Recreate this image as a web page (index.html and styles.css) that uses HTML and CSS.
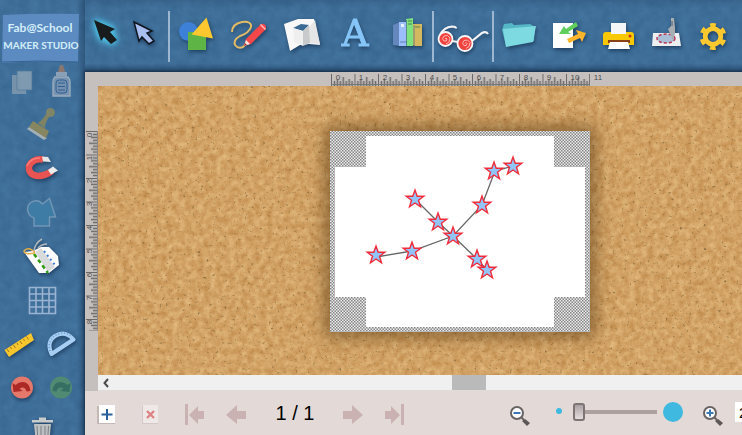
FILE: index.html
```html
<!DOCTYPE html>
<html lang="en">
<head>
<meta charset="utf-8">
<meta name="viewport" content="width=device-width, initial-scale=1">
<title>Fab@School Maker Studio</title>
<link rel="stylesheet" href="styles.css">
</head>
<body>
<div class="app">
  <svg class="texture" aria-hidden="true">
    <filter id="felt" x="0" y="0" width="100%" height="100%" color-interpolation-filters="sRGB">
      <feTurbulence type="fractalNoise" baseFrequency="0.1" numOctaves="3" seed="4"/>
      <feColorMatrix values="0.06 0 0 0 0.215  0.07 0 0 0 0.400  0.08 0 0 0 0.560  0 0 0 0 1"/>
    </filter>
    <rect width="100%" height="100%" filter="url(#felt)"/>
  </svg>

  <aside class="side">
    <a class="logo" href="#" aria-label="Fab@School Maker Studio">
      <svg viewBox="0 12 82 54">
        <path d="M3 15Q40 13 79 14L78 62Q40 60 2 63Z" fill="#5c8bc2"/>
        <path d="M2 62Q40 60 78 62" fill="none" stroke="#376394" stroke-width="1"/>
        <g class="logo-text" text-anchor="middle">
          <text class="logo-top" x="40" y="32">Fab@School</text>
          <text class="logo-main" x="41" y="49">MAKER STUDIO</text>
        </g>
      </svg>
    </a>
    <div class="row">
      <button type="button" aria-label="Copy"><svg viewBox="2 60 40 44" opacity=".75"><path d="M12 75h14v19H12z" fill="#8aa0b2"/><path d="M17 71h15v19H17z" fill="#92a8b8" stroke="#56789a" stroke-width=".7"/></svg></button>
      <button type="button" aria-label="Glue"><svg viewBox="42 60 40 44"><path d="M58 72l2-7h3l2 7z" fill="#8a7771"/><path d="M56 72h11v4H56z" fill="#8aa0b6"/><path d="M55 77h13q2 2 2 5v14H53V82q0-3 2-5z" fill="#7593b0" stroke="#9aacbd" stroke-width="1.4"/><rect x="56" y="80" width="11" height="13" rx="3" fill="#7391af" stroke="#315f91" stroke-width="1"/><path d="M58 83h7M58 86.500h7M58 90h7" stroke="#315f91"/></svg></button>
    </div>
    <div class="row"><button type="button" aria-label="Stamp"><svg viewBox="20 104 40 44"><path d="M29 127l18 11-3 2-17-11z" fill="#a4b0b5"/><path d="M33 121l16 10-3 7-17-11z" fill="#868660"/><path d="M38 123q6-4 9-11l4 3q-6 6-6 13z" fill="#7f8363"/><circle cx="50.500" cy="112.500" r="4.500" fill="#7f8567"/></svg></button></div>
    <div class="row"><button type="button" aria-label="Magnet"><svg class="lift" viewBox="20 148 40 44"><path d="M43 159.500Q33 158 29 166Q28 175 38 176Q45 176 52 171" fill="none" stroke="#e95452" stroke-width="6.500"/><path d="M40 158Q30 158 27 166" fill="none" stroke="#fa7b78" stroke-width="1.500"/><path d="M42 156.500l6 .5 3 5-8-.5z" fill="#e6e6e6"/><path d="M48 170l5-3.500 5 4-7 4z" fill="#ececec"/></svg></button></div>
    <div class="row"><button type="button" aria-label="Combine shapes"><svg viewBox="20 192 40 44"><path d="M34 226v-8q-6-2-6.500-9a8.500 8.500 0 0 1 15-5l7-5.500 6 18.500h-6v9z" fill="#3f7ca5" stroke="#7195b5" stroke-width="1.500"/></svg></button></div>
    <div class="row"><button type="button" aria-label="Tag"><svg class="lift" viewBox="20 236 40 44"><path d="M24 252l9-1 15 22-9 0z" fill="#fff"/><path d="M33 251l8-4h8l9 9 1 9-10 8-6 0z" fill="#fff"/><path d="M35 252l6-4 14 19-7 5z" fill="#d8dadb"/><path d="M34 254l14 19" stroke="#2f9a12" stroke-width="2.500" stroke-dasharray="4 3"/><path d="M44 251l11 14" stroke="#3d7ed0" stroke-width="2" stroke-dasharray="2 3"/><path d="M35 253q-11 2-11-2 3-4 8-1l3 2" fill="none" stroke="#e4ae48" stroke-width="1.500"/><path d="M34 251q1-8 8-12M38 248q4-4 9-4" fill="none" stroke="#b1b8bb" stroke-width="1.500"/></svg></button></div>
    <div class="row"><button type="button" aria-label="Grid"><svg viewBox="20 280 40 44"><path d="M29.500 287.500h26v26h-26zM36 287v27M42.500 287v27M49 287v27M29 294h27M29 300.500h27M29 307h27" fill="none" stroke="#9bb3d2" stroke-width="1.600"/></svg></button></div>
    <div class="row">
      <button type="button" aria-label="Ruler"><svg class="lift" viewBox="2 324 40 44"><path d="M4.500 350L31 333l3 7L9 357z" fill="#f7c62d"/><path d="M7 349l2 3M10.500 347l1 2M13.500 345l2 3M17 343l1 2M20 341l2 3M23.500 339l1 2M26.500 336.500l2 3" stroke="#a3781b"/></svg></button>
      <button type="button" aria-label="Protractor"><svg class="lift" viewBox="42 324 40 44"><path d="M51.500 354Q46 342 55 336Q65 330 73.500 339.500Z" fill="none" stroke="#a7cef3" stroke-width="4" stroke-linejoin="round"/><path d="M50 351Q47 342 55 335.500Q65 330 72 337" fill="none" stroke="#6c9cce" stroke-width="1.500" stroke-dasharray="1 2"/></svg></button>
    </div>
    <div class="row">
      <button type="button" aria-label="Undo"><svg class="lift" viewBox="2 368 40 44"><circle cx="22" cy="387.500" r="11" fill="#e4796b"/><path d="M12.500 383l1 9 9-1-3-2.500q5.500-3 7 3l4-.5q-1-9-8-9-4 0-7 3z" fill="#ac2925"/></svg></button>
      <button type="button" aria-label="Redo"><svg viewBox="42 368 40 44"><circle cx="61" cy="387.500" r="11" fill="#508a73"/><path d="M70.500 383l-1 9-9-1 3-2.500q-5.500-3-7 3l-4-.5q1-9 8-9 4 0 7 3z" fill="#356f64"/></svg></button>
    </div>
    <div class="row"><button type="button" aria-label="Trash"><svg class="lift" viewBox="20 412 40 44"><path d="M32 420h21v2.500H32zM39 417.500h7v3h-7z" fill="#c9cccd"/><path d="M34 424h17l-2 20H36z" fill="#bdc0c1"/><path d="M37 426l1 17M41 426v17M45 426v17M48.500 426l-1 17" stroke="#777f84"/></svg></button></div>
  </aside>

  <main class="main">
    <header class="toolbar">
      <button class="t40" type="button" aria-label="Select"><svg class="glow" viewBox="85 0 40 72"><path d="M94 20l21 9-5 3 7 8-6 4-7-7-3 4z" fill="#191c1d"/></svg></button>
      <button class="t40" type="button" aria-label="Direct select"><svg class="lift" viewBox="125 0 40 72"><path d="M134 22l18 9-5 2 7 8-5 3-7-7-3 4z" fill="#a9bff0" stroke="#10161f" stroke-width="1.500"/></svg></button>
      <span class="rule first"></span>
      <div class="group wide">
        <button type="button" aria-label="Shapes"><svg class="lift" viewBox="174 0 44 72"><circle cx="188.500" cy="31.500" r="9.500" fill="#3d80d8"/><path d="M188 32h18v18h-18z" fill="#5eb444"/><path d="M206.500 17.500l6.500 21-21.500-4z" fill="#fdc82f"/></svg></button>
        <button type="button" aria-label="Draw"><svg class="lift" viewBox="227 0 44 72"><path d="M232 32q0-8 10-10 10-1 9 5-2 6-11 9-7 4-5 9 3 4 8 2l4-4" fill="none" stroke="#e2bb66" stroke-width="2"/><path d="M244 46l2-7 15-15q3-1 5 2l0 3-15 15z" fill="#f3474a"/><path d="M260.500 24.500l5 5" stroke="#fbb" stroke-width="1.500"/><path d="M244 46l2-6 4 4z" fill="#ffe7e4"/><path d="M244 46l1-3 2 2z" fill="#a32"/></svg></button>
        <button type="button" aria-label="Pop-up"><svg class="lift" viewBox="280 0 44 72"><path d="M284 24l14-5 16 0 6 26-11-1-9 1-10 6z" fill="#f8f8f8"/><path d="M306 31l9-11 5 24-12-1z" fill="#e6e6e6"/><path d="M293 28l8-4 8 1-6 6z" fill="#3b6a94"/><path d="M293 28l10 3v15l-9-4z" fill="#efefef"/><path d="M303 31l6-6 1 18-7 3z" fill="#c9cacb"/></svg></button>
        <button type="button" aria-label="Text"><svg class="lift" viewBox="333 0 44 72"><text class="serif-a" x="355" y="46" text-anchor="middle">A</text></svg></button>
        <button type="button" aria-label="Library"><svg class="lift" viewBox="386 0 44 72"><path d="M393 25l7-3v24l-7-1z" fill="#6487bd"/><path d="M399 22h8v24h-8z" fill="#9bbdfa"/><path d="M406 19l7-1v28h-7z" fill="#7ee27d"/><path d="M413 24h9v22h-7l-2-1z" fill="#d3b85f"/><path d="M401 24h3v3h-3z" fill="#e6efff"/><path d="M408 21h4M408 24h4M415 27h5" stroke="#51804d"/><path d="M406.500 20v26M414 25v21M400 42h7" stroke="#4b648c" stroke-width=".7"/></svg></button>
      </div>
      <span class="rule"></span>
      <button class="t58" type="button" aria-label="3D view"><svg class="lift" viewBox="434 0 58 72"><path d="M440 35q4-8 12-8.500 4 0 4 2M452 41l6 1M472 41l10-8q4-2 6 1" fill="none" stroke="#f4f4f4" stroke-width="2.200"/><g fill="#f1423f" stroke="#f8f8f8" stroke-width="1.800"><circle cx="445.500" cy="39" r="7"/><circle cx="465" cy="43.500" r="7.500"/></g><g fill="none" stroke="#ffb7b3" stroke-width="1"><path d="M445 39q1-2 2 0 0 3-3 2-3-2 0-5 4-2 6 2 0 5-4 6"/><path d="M465 43.500q1-2 2 0 0 3-3 2-3-2 0-5 4-2 6 2 0 5-4 6"/></g></svg></button>
      <span class="rule"></span>
      <div class="group">
        <button type="button" aria-label="Open"><svg class="lift" viewBox="497 0 44 72"><path d="M502 30l2-6 8-1 2 2 16-1 5 3-1 14-28 5z" fill="#55b7c6"/><path d="M503 29l11-1 22-2-3 16-27 5z" fill="#7edae1"/></svg></button>
        <button type="button" aria-label="Import and export"><svg class="lift" viewBox="546 0 44 72"><path d="M553 23h20v25h-20z" fill="#fff"/><path d="M559 34l5-8 2 3 10-7 2 4-10 6 3 2z" fill="#5fce5c"/><path d="M586 33l-4 9-2-4-11 5-2-4 11-5-2-4z" fill="#ffb52c"/></svg></button>
        <button type="button" aria-label="Print"><svg class="lift" viewBox="595 0 44 72"><path d="M611 23h15v12h-15z" fill="#f4f5f6"/><path d="M606 32h5v2h15v-2h5q3 0 3 3v10h-31V35q0-3 3-3z" fill="#f8c900"/><path d="M608 40h22v3h-22z" fill="#884017"/><circle cx="630" cy="36" r="1.500" fill="#c73320"/><path d="M610 42h18l2 7h-22z" fill="#fff"/></svg></button>
        <button type="button" aria-label="Cut"><svg class="lift" viewBox="645 0 44 72"><path d="M654 33h26l2 13h-29z" fill="#eceeef"/><ellipse cx="667" cy="38.500" rx="9" ry="4.500" fill="#aabed5" stroke="#b73556" stroke-width="1.500" stroke-dasharray="3 2"/><path d="M672 18h3l1 10 0 5-1 4-1 4-3-7-2-5 3-3z" fill="#a8adb1"/><path d="M673 21v5" stroke="#4a6174" stroke-width="1"/></svg></button>
        <button type="button" aria-label="Settings"><svg class="lift" viewBox="693 0 44 72"><circle cx="713" cy="36.500" r="7.800" fill="none" stroke="#fdc92f" stroke-width="4.800"/><circle cx="713" cy="36.500" r="11.500" fill="none" stroke="#fdc92f" stroke-width="4" stroke-dasharray="5.600 6.443" transform="rotate(-104 713 36.500)"/></svg></button>
      </div>
    </header>

    <section class="workspace">
      <div class="stage">
        <svg class="ruler-x" viewBox="98 73 644 13" preserveAspectRatio="xMinYMin slice">
          <defs><pattern id="rx" x="331" y="73" width="23.500" height="13" patternUnits="userSpaceOnUse"><path d="M.5 1v12" stroke="#6b6968"/><path d="M3.440 8v5M6.380 6v7M9.310 8v5M12.250 4v9M15.190 8v5M18.130 6v7M21.060 8v5" stroke="#6b6968" stroke-width="1.500"/></pattern></defs>
          <path d="M331 73h259v13H331z" fill="url(#rx)"/>
          <path d="M331 84.500h259M589.500 74v12" stroke="#777"/>
          <g class="marks" text-anchor="middle"><text x="338" y="80">0</text><text x="361" y="80">1</text><text x="385" y="80">2</text><text x="408" y="80">3</text><text x="432" y="80">4</text><text x="455" y="80">5</text><text x="479" y="80">6</text><text x="502" y="80">7</text><text x="526" y="80">8</text><text x="549" y="80">9</text><text x="575" y="80">10</text><text x="598" y="80">11</text></g>
        </svg>
        <svg class="ruler-y" viewBox="85 86 13 305" preserveAspectRatio="xMinYMin slice">
          <defs><pattern id="ry" x="85" y="131" width="13" height="23.500" patternUnits="userSpaceOnUse"><path d="M1 .5h12" stroke="#6b6968"/><path d="M8 3.440h5M6 6.380h7M8 9.310h5M4 12.250h9M8 15.190h5M6 18.130h7M8 21.060h5" stroke="#6b6968" stroke-width="1.300"/></pattern></defs>
          <path d="M85 131h13v200H85z" fill="url(#ry)"/>
          <path d="M97.500 131v200" stroke="#8a8786"/>
          <g class="marks" text-anchor="middle"><text transform="translate(92 135)rotate(-90)">0</text><text transform="translate(92 158)rotate(-90)">1</text><text transform="translate(92 181)rotate(-90)">2</text><text transform="translate(92 204)rotate(-90)">3</text><text transform="translate(92 228)rotate(-90)">4</text><text transform="translate(92 251)rotate(-90)">5</text><text transform="translate(92 275)rotate(-90)">6</text><text transform="translate(92 298)rotate(-90)">7</text><text transform="translate(92 322)rotate(-90)">8</text></g>
        </svg>
        <div class="cork">
          <svg class="texture" aria-hidden="true">
            <filter id="grain" x="0" y="0" width="100%" height="100%" color-interpolation-filters="sRGB">
              <feTurbulence type="fractalNoise" baseFrequency="0.16" numOctaves="4" seed="9" result="n"/>
              <feColorMatrix in="n" values="0.18 0 0 0 0.735  0.24 0 0 0 0.520  0.26 0 0 0 0.270  0 0 0 0 1" result="base"/>
              <feTurbulence type="fractalNoise" baseFrequency="0.34" numOctaves="2" seed="21"/>
              <feColorMatrix values="0 0 0 0 0.540  0 0 0 0 0.420  0 0 0 0 0.240  0 4 0 0 -2.600"/>
              <feComposite in2="base" operator="over"/>
            </filter>
            <rect width="100%" height="100%" filter="url(#grain)"/>
          </svg>
          <div class="page">
            <svg viewBox="330 131 260 201">
              <defs>
                <pattern id="check" width="3" height="3" patternUnits="userSpaceOnUse"><path d="M0 0h3v3H0z" fill="#ececec"/><path d="M0 0h1.500v1.500H0zM1.500 1.500H3V3H1.500z" fill="#868686"/></pattern>
                <path id="star" d="M0-9L2.200-2.700 8.800-2.700 3.500 1.300 5.500 7.800 0 4-5.500 7.800-3.500 1.300-8.800-2.700-2.200-2.700Z"/>
              </defs>
              <path d="M330 131h260v201H330z" fill="url(#check)"/>
              <path d="M366 136h188v31h31v130h-31v30H366v-30h-31V167h31z" fill="#fff"/>
              <path d="M376 257L412 251 453 236 482 205 495 171 513 166M415 199L438 222 453 236 477 259 487 270" fill="none" stroke="#666" stroke-width="1.300"/>
              <g fill="#91c5fb" stroke="#f02c3c" stroke-width="1.400"><use href="#star" x="376" y="255"/><use href="#star" x="412" y="251"/><use href="#star" x="453" y="236"/><use href="#star" x="482" y="205"/><use href="#star" x="494" y="171"/><use href="#star" x="513" y="166"/><use href="#star" x="415" y="199"/><use href="#star" x="438" y="222"/><use href="#star" x="477" y="259"/><use href="#star" x="487" y="270"/></g>
            </svg>
          </div>
        </div>
        <div class="scroll">
          <button type="button" aria-label="Scroll left"><svg viewBox="98 375 16 16"><path d="M108 379l-3.500 4 3.500 4" fill="none" stroke="#4a4a4a" stroke-width="2"/></svg></button>
          <span class="thumb"></span>
        </div>
      </div>

      <footer class="pager">
        <button type="button" aria-label="Add page"><svg viewBox="85 391 43 44"><path d="M97 406h2v16h16v2H97z" fill="#c4b8b7"/><path d="M99 405h16v18H99z" fill="#fff"/><path d="M107 409v11M101.500 414.500h11" stroke="#295f9b" stroke-width="2"/></svg></button>
        <button type="button" aria-label="Delete page"><svg viewBox="128 391 43 44"><path d="M142 406h2v16h14v2h-16z" fill="#d3c8c7"/><path d="M143 405h15v18h-15z" fill="#eee9e7"/><path d="M147 411l7 7M154 411l-7 7" stroke="#de8183" stroke-width="2.300"/></svg></button>
        <button type="button" aria-label="First page"><svg viewBox="171 391 43 44"><path d="M185 404h3v21h-3zM189 415l9-9v5h6v8h-6v5z" fill="#c9b2b1"/></svg></button>
        <button type="button" aria-label="Previous page"><svg viewBox="214 391 43 44"><path d="M226 415l11-10v6h9v8h-9v5z" fill="#c9b2b1"/></svg></button>
        <output class="count">1 / 1</output>
        <button type="button" aria-label="Next page"><svg viewBox="331 391 43 44"><path d="M363 415l-11-10v6h-9v8h9v5z" fill="#c9b2b1"/></svg></button>
        <button type="button" aria-label="Last page"><svg viewBox="374 391 43 44"><path d="M401 404h3v21h-3zM400 415l-9-9v5h-6v8h6v5z" fill="#c9b2b1"/></svg></button>
        <button class="zoom-out" type="button" aria-label="Zoom out"><svg viewBox="498 391 43 44"><circle cx="517" cy="413" r="6" fill="#fff" stroke="#686463" stroke-width="2"/><path d="M513.500 413h7" stroke="#3a77b5" stroke-width="2"/><path d="M521 417l3 3" stroke="#686463" stroke-width="2"/><path d="M522 421l3-2 5 4-3 3z" fill="#5b5857"/></svg></button>
        <span class="dot small"></span>
        <input class="slider" type="range" min="0" max="100" value="0" aria-label="Zoom">
        <span class="dot big"></span>
        <button class="zoom-in" type="button" aria-label="Zoom in"><svg viewBox="690 391 43 44"><circle cx="710" cy="413" r="6" fill="#fff" stroke="#686463" stroke-width="2"/><path d="M706.500 413h7M710 409.500v7" stroke="#3a77b5" stroke-width="2"/><path d="M714 417l3 3" stroke="#686463" stroke-width="2"/><path d="M715 421l3-2 5 4-3 3z" fill="#5b5857"/></svg></button>
        <input class="percent" type="text" value="2" aria-label="Zoom percent">
      </footer>
    </section>
  </main>
</div>
</body>
</html>
```

FILE: styles.css
```css
* { box-sizing: border-box; }
body { margin: 0; font-family: "Liberation Sans", Arial, sans-serif; background: #3f709c; }
button { border: 0; padding: 0; background: none; flex: none; }
svg { display: block; }
button svg { width: 100%; height: 100%; overflow: visible; }

.app { position: relative; display: grid; grid-template-columns: 85px minmax(0, 1fr); height: 100vh; overflow: hidden; }
.texture { position: absolute; inset: 0; width: 100%; height: 100%; }
.side, .main { position: relative; min-width: 0; min-height: 0; }
.lift { filter: drop-shadow(1px 2px 2px rgba(10, 30, 60, .6)); }
.glow { filter: drop-shadow(0 0 3px #4ec9ee) drop-shadow(0 0 3px #4ec9ee); }

.side { display: flex; flex-direction: column; overflow: hidden; background: linear-gradient(90deg, transparent 90%, rgba(15, 35, 65, .35)); }
.logo { flex: none; padding-top: 12px; height: 60px; }
.logo svg { width: 82px; height: 54px; }
.logo-text { font-family: Lato, "Liberation Sans", sans-serif; font-weight: 700; fill: #d3eef8; }
.logo-top { font-size: 12px; }
.logo-main { font-size: 10px; }
.row { flex: none; display: flex; height: 44px; padding-left: 2px; }
.row button { width: 40px; height: 44px; }
.row button:only-child { margin-left: 18px; }

.main { display: grid; grid-template-rows: 72px minmax(0, 1fr); }
.toolbar { display: flex; align-items: center; background: linear-gradient(rgba(10, 30, 60, .15), transparent 12%, transparent 88%, rgba(10, 30, 60, .45)); }
.toolbar button { width: 44px; height: 72px; }
.toolbar .t40 { width: 40px; }
.toolbar .t58 { width: 58px; }
.group { display: flex; gap: 5px; margin-left: 3px; }
.group.wide { gap: 9px; margin: 0 2px 0 4px; }
.rule { flex: none; width: 2px; height: 51px; background: #9db7d2; }
.rule.first { margin-left: 3px; }
.serif-a { font-family: "DejaVu Serif", serif; font-size: 37px; fill: #86c5f7; stroke: #86c5f7; stroke-width: 1px; }

.workspace { display: grid; grid-template-rows: minmax(0, 1fr) 44px; min-width: 0; background: #c5c0be; box-shadow: 0 0 3px 1px rgba(15, 30, 50, .7); }
.stage { display: grid; grid-template: 14px minmax(0, 1fr) 16px / 13px minmax(0, 1fr); min-height: 0; overflow: hidden; }
.ruler-x { grid-area: 1 / 2; width: 100%; height: 13px; margin-top: 1px; }
.ruler-y { grid-area: 2 / 1 / 4 / 2; width: 13px; height: 305px; }
.marks { font-size: 8px; fill: #4f4d4c; }
.cork { grid-area: 2 / 2; position: relative; padding: 45px 0 0 232px; overflow: hidden; background: #cf9f5f; }
.page { position: relative; width: 260px; box-shadow: 0 0 16px 5px rgba(75, 45, 10, .55); }
.page svg { width: 100%; }
.scroll { grid-area: 3 / 2; display: flex; background: #f0f0f0; border-bottom: 1px solid #dfdbda; }
.scroll button { width: 16px; height: 16px; }
.thumb { width: 34px; margin-left: 338px; background: #bababa; }

.pager { display: flex; align-items: center; background: #e3dad8; overflow: hidden; }
.pager button { width: 43px; height: 44px; }
.count { flex: none; width: 74px; padding-left: 2px; font-size: 20px; line-height: 24px; text-align: center; color: #000; }
.pager .zoom-out { margin-left: 81px; }
.dot { flex: none; border-radius: 50%; background: #3fb9df; }
.dot.small { width: 6px; height: 6px; margin: 0 11px 4px 15px; }
.dot.big { width: 20px; height: 20px; margin: 0 7px 2px 6px; }
.slider { flex: none; appearance: none; width: 84px; height: 20px; margin: 0 0 3px; background: linear-gradient(#aca19f, #aca19f) center / 100% 4px no-repeat; }
.slider::-webkit-slider-thumb { appearance: none; width: 12px; height: 18px; border: 2px solid #7d7473; border-radius: 3px; background: linear-gradient(#aaa1a4, #e4dedf); }
.percent { flex: none; width: 60px; height: 20px; margin: 0 0 2px 2px; padding: 0 4px; border: 0; background: #fff; font: 15px "Liberation Sans", Arial, sans-serif; color: #000; }
```
